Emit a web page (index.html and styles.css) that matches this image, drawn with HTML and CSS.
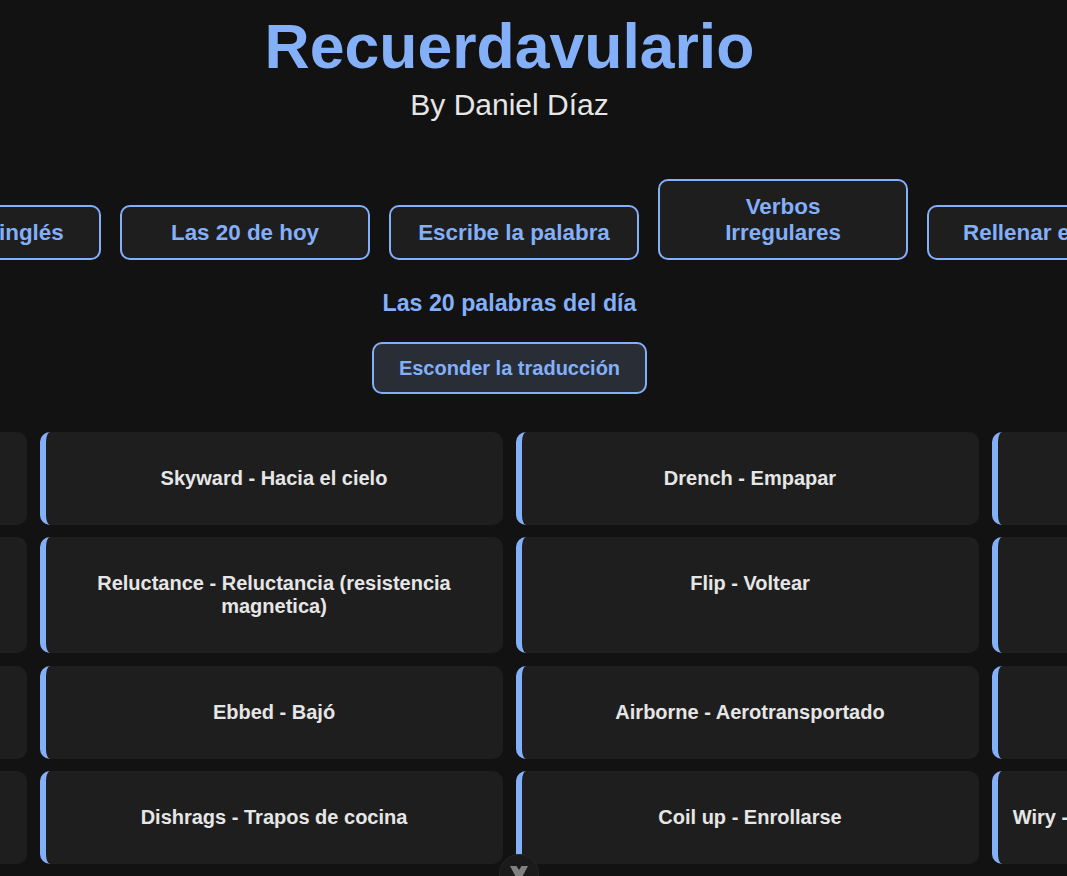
FILE: index.html
```html
<!DOCTYPE html>
<html lang="es">
<head>
    <meta charset="UTF-8">
    <meta name="viewport" content="width=device-width, initial-scale=1.0">
    <title>Recuerdavulario</title>
    <link rel="stylesheet" href="styles.css">
</head>
<body>
    <div class="page">
        <header class="header">
            <h1>Recuerdavulario</h1>
            <p class="author">By Daniel Díaz</p>
        </header>

        <nav class="nav">
            <button class="nav-btn">Frases en inglés</button>
            <button class="nav-btn">Las 20 de hoy</button>
            <button class="nav-btn">Escribe la palabra</button>
            <button class="nav-btn">Verbos Irregulares</button>
            <button class="nav-btn">Rellenar espacio</button>
        </nav>

        <h2 class="section-title">Las 20 palabras del día</h2>
        <div class="toggle-row">
            <button class="toggle-btn">Esconder la traducción</button>
        </div>

        <div class="word-grid">
            <div class="word-card">Gloom - Penumbra</div>
            <div class="word-card">Skyward - Hacia el cielo</div>
            <div class="word-card">Drench - Empapar</div>
            <div class="word-card">Sway - Balancearse</div>

            <div class="word-card">Stale - Rancio</div>
            <div class="word-card">Reluctance - Reluctancia (resistencia magnetica)</div>
            <div class="word-card">Flip - Voltear</div>
            <div class="word-card">Dull - Aburrido</div>

            <div class="word-card">Shrug - Encogerse</div>
            <div class="word-card">Ebbed - Bajó</div>
            <div class="word-card">Airborne - Aerotransportado</div>
            <div class="word-card">Blunt - Sin filo</div>

            <div class="word-card">Wade - Vadear</div>
            <div class="word-card">Dishrags - Trapos de cocina</div>
            <div class="word-card">Coil up - Enrollarse</div>
            <div class="word-card">Wiry - Delgado pero fornido y muy resistente</div>
        </div>
    </div>

    <button class="scroll-btn" aria-label="Bajar">
        <svg class="scroll-icon" width="18" height="18" viewBox="0 0 18 18"><path d="M0 1H6.5L9 5L11.5 1H18L9 18Z" fill="#808080"/></svg>
    </button>
</body>
</html>
```

FILE: styles.css
```css
html, body {
    height: 100%;
    overflow: hidden;
}
body {
    margin: 0;
    background-color: #121212;
    color: #e6e6e6;
    font-family: "Liberation Sans", Arial, sans-serif;
}
.page {
    width: 1019px;
}
.header {
    text-align: center;
    padding-top: 12px;
}
h1 {
    margin: 0;
    font-size: 62.5px;
    line-height: 69px;
    color: #84aff9;
}
.author {
    margin: 6px 0 0;
    font-size: 30px;
    line-height: 36px;
}
.nav {
    display: flex;
    justify-content: center;
    align-items: flex-end;
    gap: 19px;
    margin-top: 56px;
    padding-left: 9px;
}
.nav-btn {
    flex: none;
    width: 250px;
    padding: 12.5px 26px;
    background-color: #1e1e1e;
    border: 2px solid #84aff9;
    border-radius: 10px;
    color: #84aff9;
    font-family: inherit;
    font-size: 22.4px;
    line-height: 26px;
    font-weight: bold;
}
.section-title {
    margin: 30px 0 0;
    text-align: center;
    font-size: 23.2px;
    line-height: 26px;
    color: #84aff9;
}
.toggle-row {
    display: flex;
    justify-content: center;
    margin-top: 26px;
}
.toggle-btn {
    padding: 12px 25px;
    background-color: #292d36;
    border: 2px solid #84aff9;
    border-radius: 10px;
    color: #84aff9;
    font-family: inherit;
    font-size: 20px;
    line-height: 24px;
    font-weight: bold;
}
.word-grid {
    display: grid;
    grid-template-columns: repeat(4, 463px);
    justify-content: center;
    gap: 12.4px 13px;
    margin-top: 38px;
}
.word-card {
    padding: 35px 15px 35px 14px;
    background-color: #1e1e1e;
    border-left: 6px solid #84aff9;
    border-radius: 10px;
    font-size: 20px;
    line-height: 23px;
    font-weight: bold;
    text-align: center;
}
.scroll-btn {
    position: fixed;
    left: 499px;
    top: 854px;
    width: 40px;
    height: 40px;
    padding: 10px;
    background-color: #1a1a1a;
    border: 1px solid #262626;
    border-radius: 50%;
}
.scroll-icon {
    display: block;
}
```
